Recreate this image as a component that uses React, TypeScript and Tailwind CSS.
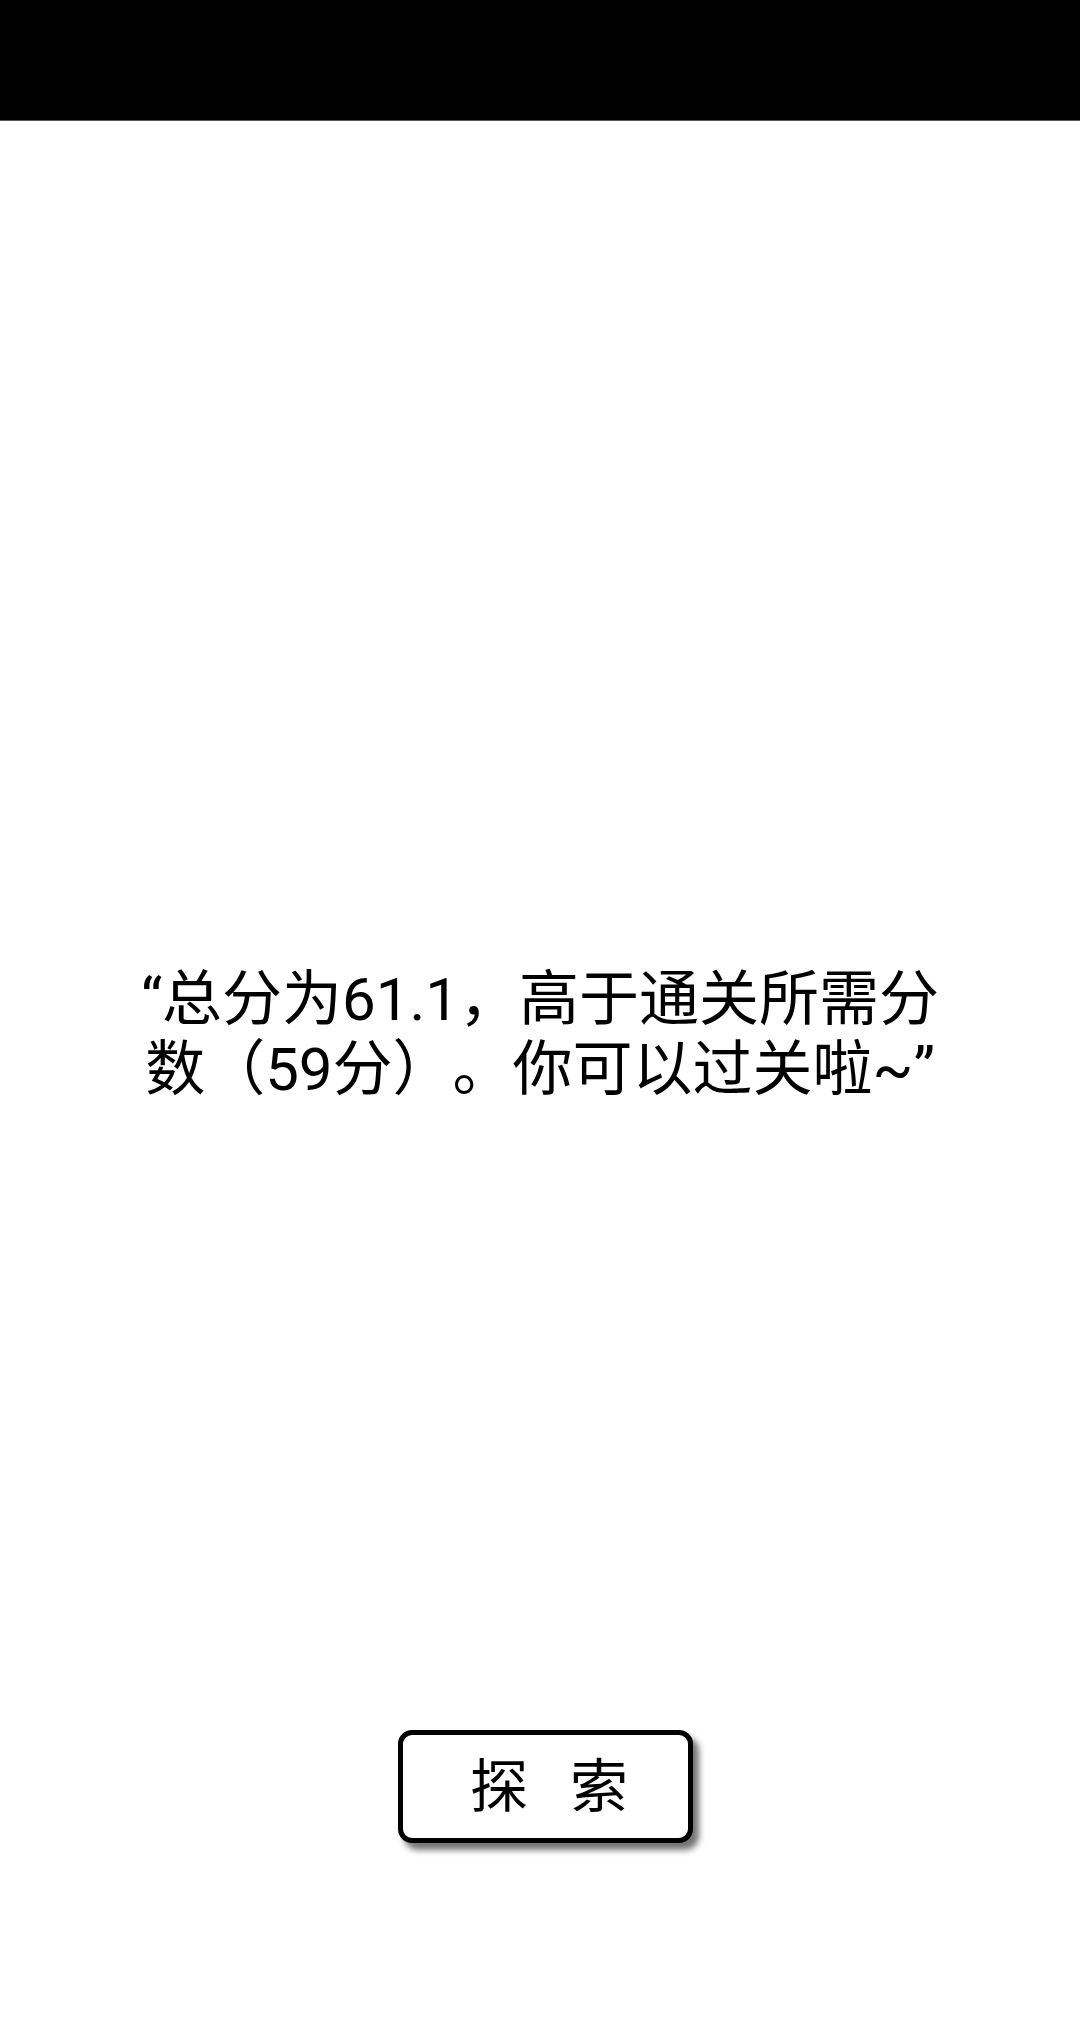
export default function App() {
  return (
    <div
      className="flex h-[2034px] w-full flex-col bg-white text-black [text-spacing-trim:space-all]"
      style={{ fontFamily: '"Roboto", "Noto Sans CJK SC", sans-serif' }}
    >
      <div className="h-[121px] w-full border-b border-[#5a5a5a] bg-black" />

      <p className="mx-auto mt-[844px] w-[900px] text-center text-[60px] leading-[70px]">
        “总分为61.1，高于通关所需分
        <br />
        数（59分）。你可以过关啦~”
      </p>

      <div className="mt-[625px] flex justify-center">
        <button className="ml-[10px] flex h-[113px] w-[295px] items-center justify-center gap-[42px] rounded-[14px] border-[5px] border-black bg-white pl-[8px] text-[58px] leading-none shadow-[6px_7px_6px_rgba(0,0,0,0.55)]">
          <span>探</span>
          <span>索</span>
        </button>
      </div>
    </div>
  );
}
